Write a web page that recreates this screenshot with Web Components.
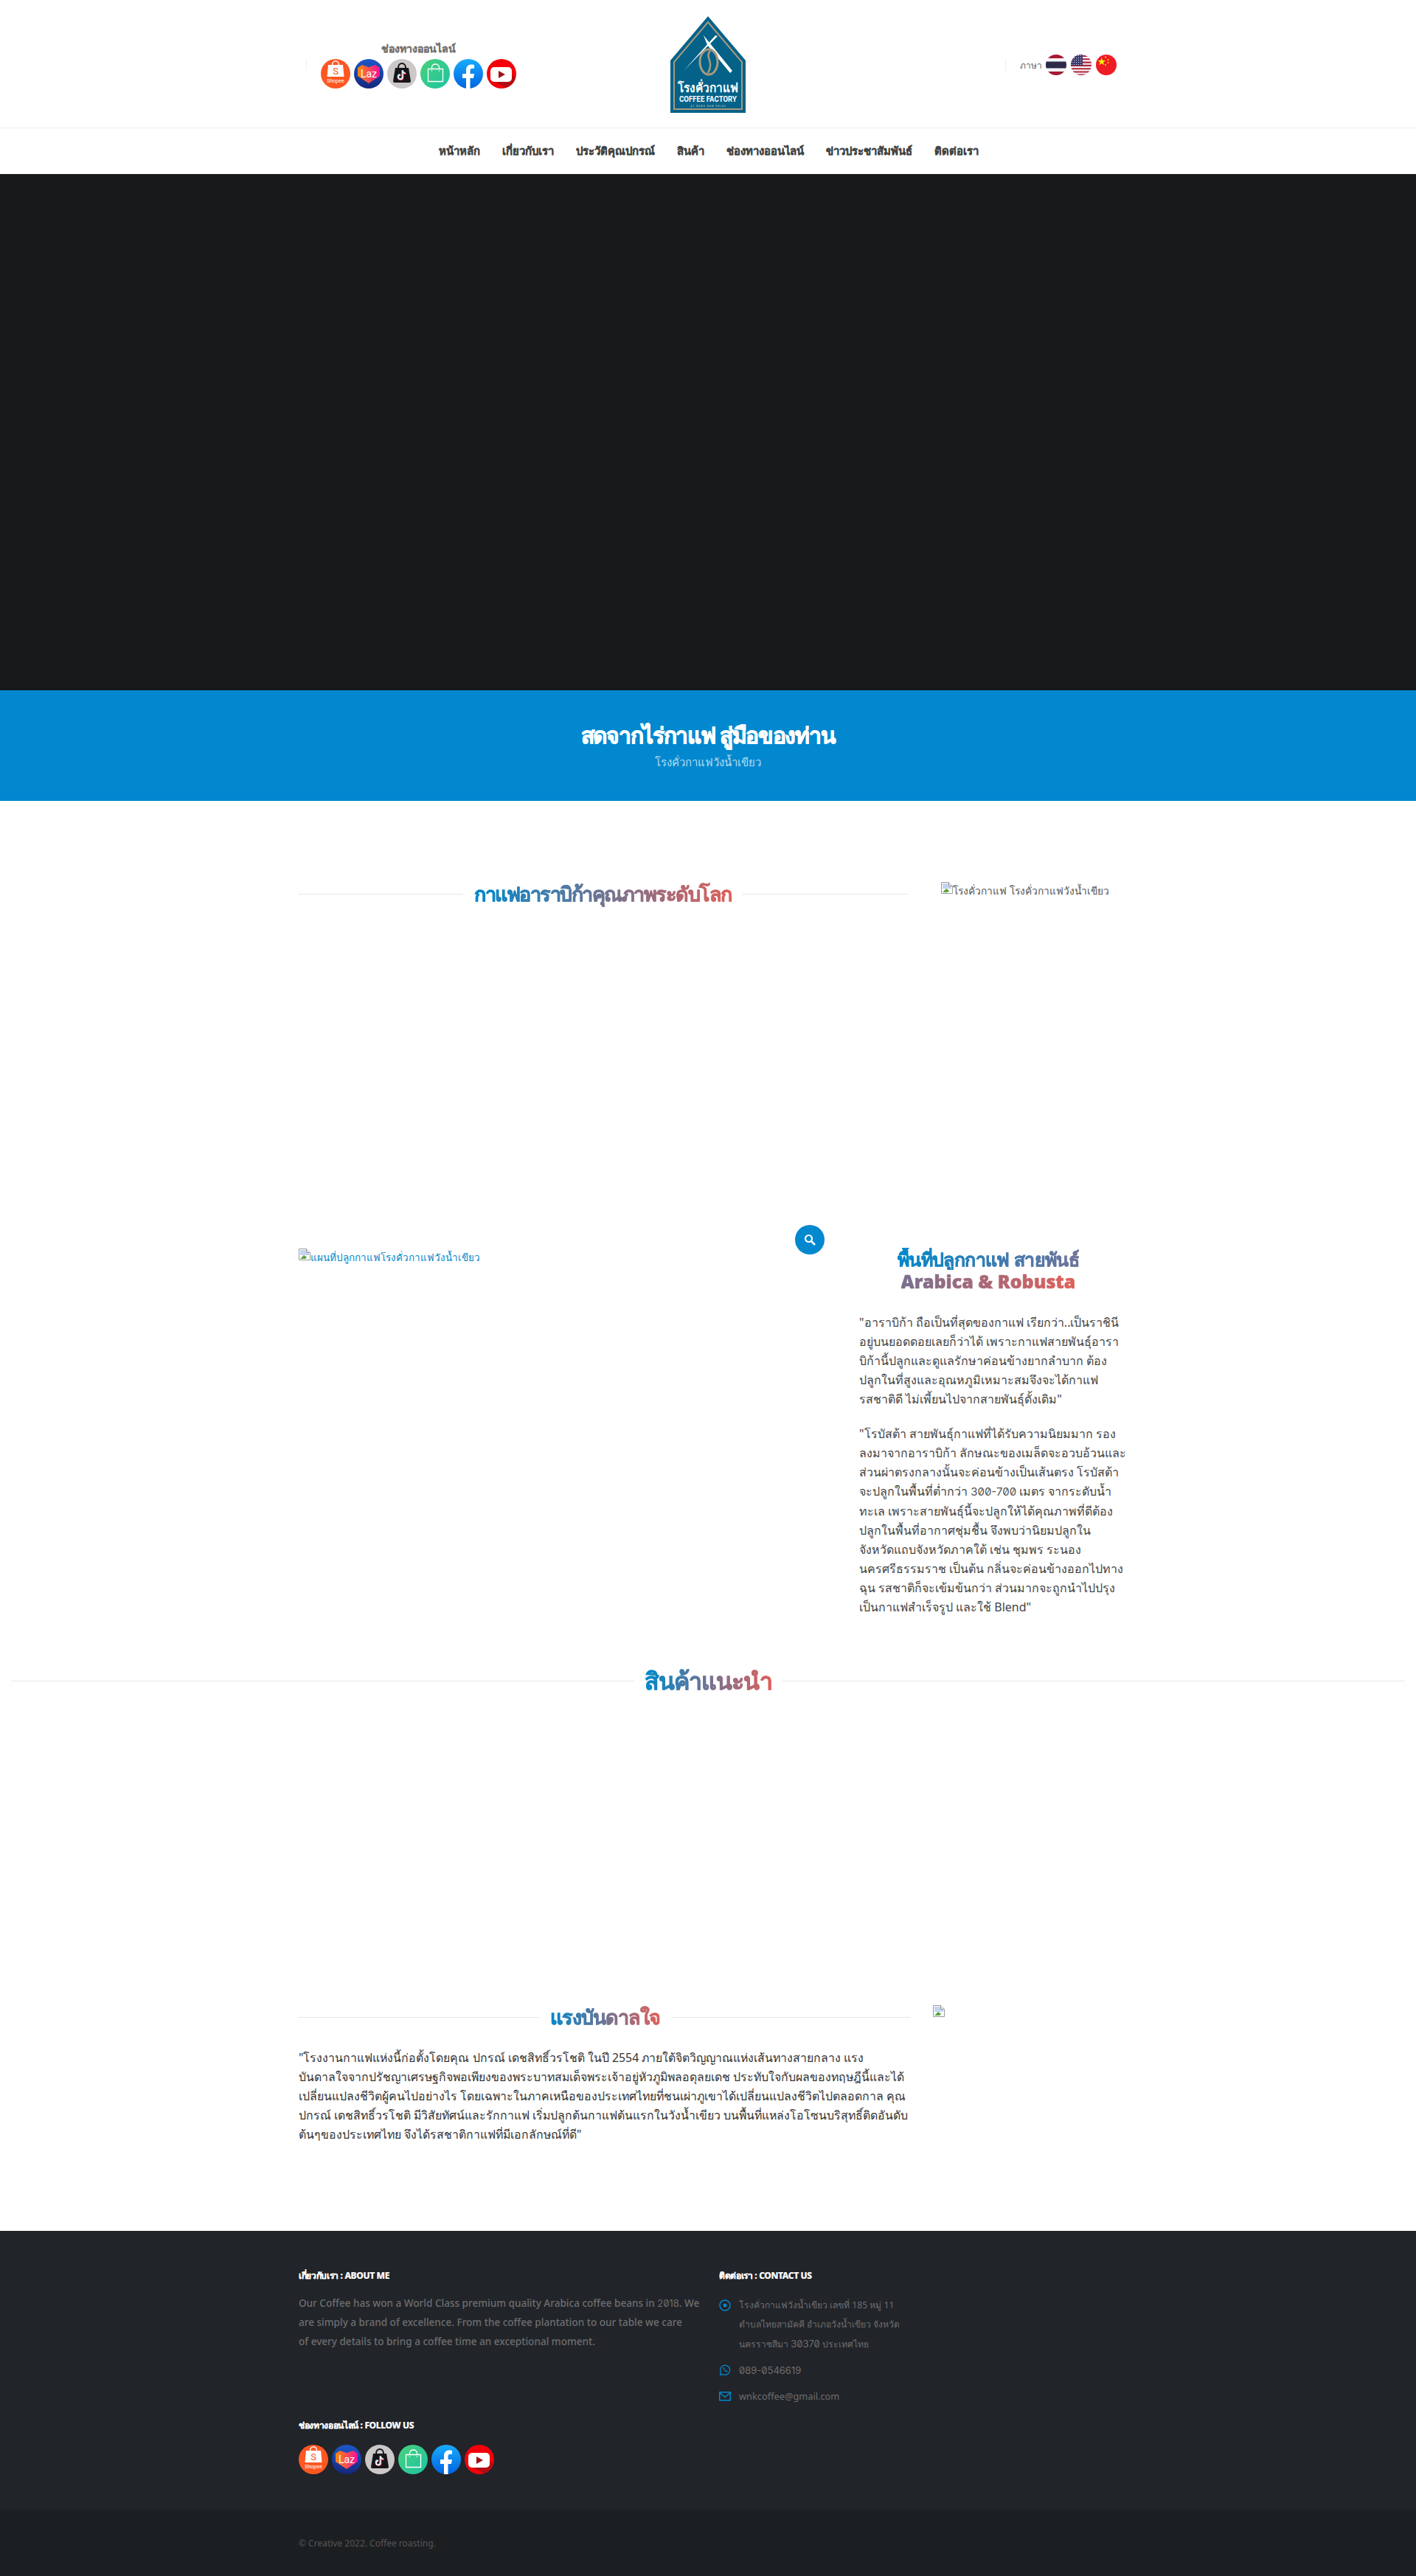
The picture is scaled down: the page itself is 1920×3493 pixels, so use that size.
<!DOCTYPE html>
<html lang="th">
<head>
<meta charset="utf-8">
<title>โรงคั่วกาแฟวังน้ำเขียว</title>
<style>
  html, body { margin: 0; padding: 0; background: #fff; }
  body { font-family: "Noto Sans", Inter, sans-serif; font-size: 16px; color: #444; }
</style>
</head>
<body>
<site-header></site-header>
<hero-band></hero-band>
<page-title main="สดจากไร่กาแฟ สู่มือของท่าน" sub="โรงคั่วกาแฟวังน้ำเขียว"></page-title>
<world-class></world-class>
<plant-area></plant-area>
<featured-products></featured-products>
<inspire-block></inspire-block>
<site-footer></site-footer>
<bottom-bar></bottom-bar>

<script>
const SOCIAL = `
  <svg viewBox="0 0 40 40"><circle cx="20" cy="20" r="20" fill="#fe5722"/><path d="M10 8h20l1.500 16h-23z" fill="#fff"/><path d="M15.500 8c0-7 9-7 9 0" fill="none" stroke="#fff" stroke-width="1.400"/><text x="20" y="21" font-size="13" text-anchor="middle" fill="#fe5722" font-family="Roboto">S</text><text x="20" y="32" font-size="7" text-anchor="middle" fill="#fff" font-family="Roboto">Shopee</text></svg>
  <svg viewBox="0 0 40 40"><defs><linearGradient id="lz" x1="0" x2="1"><stop offset="0" stop-color="#f98a0a"/><stop offset="1" stop-color="#f5109a"/></linearGradient><linearGradient id="lb" x1="0" y1="0" x2="0" y2="1"><stop offset="0" stop-color="#1c58c8"/><stop offset="1" stop-color="#16277c"/></linearGradient></defs><circle cx="20" cy="20" r="20" fill="url(#lb)"/><path d="M5 12l6-4 9 3 9-3 6 4v11L20 33 5 23z" fill="url(#lz)"/><text x="20" y="25" font-size="14" text-anchor="middle" fill="#fff" font-family="Roboto">Laz</text></svg>
  <svg viewBox="0 0 40 40"><circle cx="20" cy="20" r="20" fill="#cbc8c7"/><path d="M11 12h18l3 18q0 2-2 2H10q-2 0-2-2z" fill="#17151a"/><path d="M15 12c0-8 10-8 10 0" fill="none" stroke="#17151a" stroke-width="2"/><path d="M20.500 15v9a3 3 0 1 1-3-3M20.500 15c0 2 2 4 4 4" fill="none" stroke="#25f4ee" stroke-width="2"/><path d="M21.500 16v9a3 3 0 1 1-3-3M21.500 16c0 2 2 4 4 4" fill="none" stroke="#fe2c55" stroke-width="2"/><path d="M21 15.500v9a3 3 0 1 1-3-3M21 15.500c0 2 2 4 4 4" fill="none" stroke="#fff" stroke-width="1.400"/></svg>
  <svg viewBox="0 0 40 40"><defs><linearGradient id="gb" x1="0" y1="0" x2="1" y2="1"><stop offset="0" stop-color="#4ad07a"/><stop offset="1" stop-color="#1cc4a2"/></linearGradient></defs><circle cx="20" cy="20" r="20" fill="url(#gb)"/><path d="M10.500 13.500h20v17h-20z" fill="none" stroke="#fff" stroke-width="1.300"/><path d="M15.500 13.500v-2c0-6 10-6 10 0v2" fill="none" stroke="#fff" stroke-width="1.300"/><circle cx="15.500" cy="16" r=".8" fill="#fff"/><circle cx="25.500" cy="16" r=".8" fill="#fff"/></svg>
  <svg viewBox="0 0 40 40"><defs><linearGradient id="fb" x1="0" y1="0" x2="0" y2="1"><stop offset="0" stop-color="#18acfe"/><stop offset="1" stop-color="#0163e0"/></linearGradient></defs><circle cx="20" cy="20" r="20" fill="url(#fb)"/><path d="M17 40V26h-5v-6h5v-5c0-5 3-7.500 7-7.500 2 0 4 .3 4 .3v5h-2.500c-2.500 0-3 1.500-3 3V20h5.500l-1 6h-4.500v14z" fill="#fff"/></svg>
  <svg viewBox="0 0 40 40"><circle cx="20" cy="20" r="20" fill="#f5000a"/><path d="M15 16l9-3 15 13a20 20 0 0 1-13 13L10 30z" fill="#b30c10"/><rect x="5" y="11" width="29" height="20" rx="5" fill="#fff"/><path d="M16 16l9 5-9 5z" fill="#a31015"/></svg>`;

const BROKEN = `<svg width="16" height="16" viewBox="0 0 16 16" style="flex:none"><path d="M.5.500h10l5 5v10H.5z" fill="#fff" stroke="#9a9a9a"/><path d="M10.500.500v5h5" fill="#e8e8e8" stroke="#9a9a9a"/><path d="M2 2h8v4h4v3H2z" fill="#c4d4f2"/><path d="M2 14l5-5 3 2 4 3z" fill="#5aa53c"/><path d="M8 15l7-7v7z" fill="#fff"/></svg>`;

class SocialIcons extends HTMLElement {
  constructor() {
    super();
    this.attachShadow({ mode: "open" });
  }
  connectedCallback() {
    this.shadowRoot.innerHTML = `
      <style>
        :host { display: flex; gap: 5px; }
        svg { width: 40px; height: 40px; flex: none; display: block; }
      </style>
      ${SOCIAL}
    `;
  }
}
customElements.define("social-icons", SocialIcons);

class FancyHeading extends HTMLElement {
  constructor() {
    super();
    this.attachShadow({ mode: "open" });
  }
  connectedCallback() {
    this.shadowRoot.innerHTML = `
      <style>
        :host { display: flex; align-items: center; gap: var(--gap, 15px); }
        i { flex: 1; height: 1px; background: #e6e6e6; }
        span {
          font-weight: 900;
          font-size: var(--size, 27px);
          letter-spacing: var(--ls, -1.5px);
          line-height: var(--lh, 52px);
          white-space: nowrap;
          -webkit-text-stroke: .7px transparent;
          background: linear-gradient(90deg, #0088cc, #e0605a);
          -webkit-background-clip: text;
          background-clip: text;
          color: transparent;
        }
      </style>
      <i></i><span><slot></slot></span><i></i>
    `;
  }
}
customElements.define("fancy-heading", FancyHeading);

class BrokenImage extends HTMLElement {
  constructor() {
    super();
    this.attachShadow({ mode: "open" });
  }
  connectedCallback() {
    this.shadowRoot.innerHTML = `
      <style>
        :host { display: flex; align-items: flex-end; align-self: start; line-height: 16px; }
        span { line-height: 20px; margin-bottom: -6px; white-space: nowrap; }
      </style>
      ${BROKEN}<span><slot></slot></span>
    `;
  }
}
customElements.define("broken-image", BrokenImage);

class SiteHeader extends HTMLElement {
  constructor() {
    super();
    this.attachShadow({ mode: "open" });
  }
  connectedCallback() {
    const menu = ["หน้าหลัก", "เกี่ยวกับเรา", "ประวัติคุณปกรณ์", "สินค้า", "ช่องทางออนไลน์", "ข่าวประชาสัมพันธ์", "ติดต่อเรา"];
    this.shadowRoot.innerHTML = `
      <style>
        :host { display: block; }
        .top { height: 174px; box-sizing: border-box; border-bottom: 1px solid #eceded; }
        .wrap { width: 1140px; margin: 0 auto; display: grid; grid-template-columns: repeat(3, 380px); }
        .left { display: flex; padding: 56px 0 0 25px; }
        .rule { width: 1px; height: 16px; background: #eee; margin-top: 23px; flex: none; }
        .shop { margin-left: 19px; width: 265px; }
        .shop p { margin: 0 0 4px; text-align: center; font-size: 14px; font-weight: 800; line-height: 20px; color: #77736f; -webkit-text-stroke: .3px #77736f; }
        .logo { padding-top: 22px; display: flex; justify-content: center; }
        .right { display: flex; align-items: center; height: 28px; padding: 74px 0 0 213px; }
        .lang { margin-left: 19px; width: 35px; font-size: 12px; color: #666; }
        .flag { width: 28px; height: 28px; margin-right: 6px; flex: none; }
        nav { height: 62px; display: flex; justify-content: center; align-items: center; gap: 30px; font-size: 14.8px; font-weight: 800; color: #444; -webkit-text-stroke: .3px #444; padding-left: 2px; }
      </style>
      <div class="top">
        <div class="wrap">
          <div class="left">
            <div class="rule"></div>
            <div class="shop">
              <p>ช่องทางออนไลน์</p>
              <social-icons></social-icons>
            </div>
          </div>
          <div class="logo">
            <svg width="102" height="131" viewBox="0 0 102 131">
              <path d="M51 0l51 60v71H0V60z" fill="#046289"/>
              <path d="M51 8L97 62v64H5V62z" fill="none" stroke="#a89a7e" stroke-width="2"/>
              <path d="M61 26l3 1-46 47z" fill="#fff"/>
              <path d="M45 26l39 48-3 3-31-38z" fill="#fff"/>
              <ellipse cx="52" cy="62" rx="12" ry="17" fill="none" stroke="#a89a7e" stroke-width="3"/>
              <path d="M54 47c-8 8 6 14-3 30" fill="none" stroke="#a89a7e" stroke-width="2.500"/>
              <text x="51" y="103" font-size="17" font-weight="700" fill="#fff" text-anchor="middle" textLength="82" lengthAdjust="spacingAndGlyphs" font-family="Noto Sans, sans-serif">โรงคั่วกาแฟ</text>
              <text x="51" y="116" font-size="10" font-weight="700" fill="#fff" text-anchor="middle" textLength="78" lengthAdjust="spacingAndGlyphs" font-family="Roboto, sans-serif">COFFEE FACTORY</text>
              <text x="51" y="123" font-size="3" fill="#d6d2c8" text-anchor="middle" textLength="47" font-family="Roboto, sans-serif">AT WANG NAM KHIAO</text>
            </svg>
          </div>
          <div class="right">
            <div class="rule" style="margin-top:0"></div>
            <span class="lang">ภาษา</span>
            <svg class="flag" viewBox="0 0 28 28"><defs><clipPath id="c1"><circle cx="14" cy="14" r="14"/></clipPath></defs><g clip-path="url(#c1)"><rect width="28" height="28" fill="#f4f5f8"/><rect width="28" height="5" fill="#a51931"/><rect y="23" width="28" height="5" fill="#a51931"/><rect y="9.500" width="28" height="9" fill="#2d2a4a"/></g></svg>
            <svg class="flag" viewBox="0 0 28 28"><defs><clipPath id="c2"><circle cx="14" cy="14" r="14"/></clipPath><pattern id="st" width="3" height="3" patternUnits="userSpaceOnUse"><circle cx="1.500" cy="1.500" r=".6" fill="#fff"/></pattern></defs><g clip-path="url(#c2)"><rect width="28" height="28" fill="#f4f5f8"/><path d="M0 2h28M0 6.300h28M0 10.600h28M0 14.900h28M0 19.200h28M0 23.500h28M0 27.500h28" stroke="#b22234" stroke-width="2.100"/><rect width="16" height="15" fill="#3c3b6e"/><rect width="16" height="15" fill="url(#st)"/></g></svg>
            <svg class="flag" viewBox="0 0 28 28"><circle cx="14" cy="14" r="14" fill="#ee1c25"/><path d="M7 3.500l1.500 4.600h4.800l-3.900 2.800 1.500 4.600L7 12.700l-3.900 2.800 1.500-4.600L.7 8.100h4.800z" fill="#ff0" transform="translate(1.800 1) scale(.85)"/><g fill="#ff0"><circle cx="13" cy="3.500" r=".9"/><circle cx="16.500" cy="7" r=".9"/><circle cx="16.500" cy="11" r=".9"/><circle cx="13" cy="14" r=".9"/></g></svg>
          </div>
        </div>
      </div>
      <nav>${menu.map((m) => `<span>${m}</span>`).join("")}</nav>
    `;
  }
}
customElements.define("site-header", SiteHeader);

class HeroBand extends HTMLElement {
  constructor() {
    super();
    this.attachShadow({ mode: "open" });
  }
  connectedCallback() {
    this.shadowRoot.innerHTML = `<style>:host { display: block; height: 700px; background: #17181a; }</style>`;
  }
}
customElements.define("hero-band", HeroBand);

class PageTitle extends HTMLElement {
  constructor() {
    super();
    this.attachShadow({ mode: "open" });
  }
  connectedCallback() {
    this.shadowRoot.innerHTML = `
      <style>
        :host { display: block; height: 150px; box-sizing: border-box; padding-top: 36px; background: #0288cf; text-align: center; }
        h1 { margin: 0; font-size: 30px; letter-spacing: -1.3px; line-height: 49px; font-weight: 900; color: #fff; -webkit-text-stroke: .8px #fff; }
        p { margin: 0; font-size: 15px; line-height: 24px; color: rgba(255,255,255,.72); }
      </style>
      <h1>${this.getAttribute("main")}</h1>
      <p>${this.getAttribute("sub")}</p>
    `;
  }
}
customElements.define("page-title", PageTitle);

class WorldClass extends HTMLElement {
  constructor() {
    super();
    this.attachShadow({ mode: "open" });
  }
  connectedCallback() {
    this.shadowRoot.innerHTML = `
      <style>
        :host { display: block; height: 574px; box-sizing: border-box; padding-top: 100px; }
        .row { width: 1140px; margin: 0 auto; display: grid; grid-template-columns: 855px 285px; }
        fancy-heading { margin: 0 15px; }
        broken-image { margin: 10px 0 0 31px; font-size: 13.8px; color: #555; }
      </style>
      <div class="row">
        <fancy-heading>กาแฟอาราบิก้าคุณภาพระดับโลก</fancy-heading>
        <broken-image>โรงคั่วกาแฟ โรงคั่วกาแฟวังน้ำเขียว</broken-image>
      </div>
    `;
  }
}
customElements.define("world-class", WorldClass);

class PlantArea extends HTMLElement {
  constructor() {
    super();
    this.attachShadow({ mode: "open" });
  }
  connectedCallback() {
    this.shadowRoot.innerHTML = `
      <style>
        :host { display: block; height: 594px; }
        .row { width: 1140px; margin: 0 auto; display: grid; grid-template-columns: 760px 380px; }
        .pic { position: relative; padding: 33px 15px 0; }
        broken-image { font-size: 13.5px; color: #0088cc; }
        .zoom { position: absolute; top: 1px; left: 688px; width: 40px; height: 40px; border-radius: 50%; background: #0288cf; display: flex; align-items: center; justify-content: center; }
        .txt { padding: 32px 15px 0; }
        h2 { margin: 0 0 28px; text-align: center; font-size: 25px; line-height: 30px; font-weight: 900; }
        h2 span {
          display: table;
          margin: 0 auto;
          -webkit-text-stroke: .6px transparent;
          -webkit-background-clip: text;
          background-clip: text;
          color: transparent;
        }
        h2 .a { background-image: linear-gradient(90deg, #0088cc, #6f7399); letter-spacing: -.6px; }
        h2 .b { background-image: linear-gradient(90deg, #777090, #e0605a); }
        p { margin: 0 0 21px; font-size: 16px; line-height: 26px; color: #444; white-space: nowrap; }
        .num { font-family: Inter, sans-serif; font-size: 15px; font-weight: 400; color: #555; font-feature-settings: "zero"; }
      </style>
      <div class="row">
        <div class="pic">
          <broken-image>แผนที่ปลูกกาแฟโรงคั่วกาแฟวังน้ำเขียว</broken-image>
          <div class="zoom"><svg width="16" height="16" viewBox="0 0 16 16"><circle cx="6.500" cy="6.500" r="4.500" fill="none" stroke="#fff" stroke-width="2.200"/><path d="M10 10l5 5" stroke="#fff" stroke-width="2.600"/></svg></div>
        </div>
        <div class="txt">
          <h2><span class="a">พื้นที่ปลูกกาแฟ สายพันธ์</span><span class="b">Arabica &amp; Robusta</span></h2>
          <p>"อาราบิก้า ถือเป็นที่สุดของกาแฟ เรียกว่า..เป็นราชินี<br>อยู่บนยอดดอยเลยก็ว่าได้ เพราะกาแฟสายพันธุ์อารา<br>บิก้านี้ปลูกและดูแลรักษาค่อนข้างยากลำบาก ต้อง<br>ปลูกในที่สูงและอุณหภูมิเหมาะสมจึงจะได้กาแฟ<br>รสชาติดี ไม่เพี้ยนไปจากสายพันธุ์ดั้งเดิม"</p>
          <p>"โรบัสต้า สายพันธุ์กาแฟที่ได้รับความนิยมมาก รอง<br>ลงมาจากอาราบิก้า ลักษณะของเมล็ดจะอวบอ้วนและ<br>ส่วนผ่าตรงกลางนั้นจะค่อนข้างเป็นเส้นตรง โรบัสต้า<br>จะปลูกในพื้นที่ต่ำกว่า <span class="num">300-700</span> เมตร จากระดับน้ำ<br>ทะเล เพราะสายพันธุ์นี้จะปลูกให้ได้คุณภาพที่ดีต้อง<br>ปลูกในพื้นที่อากาศชุ่มชื้น จึงพบว่านิยมปลูกใน<br>จังหวัดแถบจังหวัดภาคใต้ เช่น ชุมพร ระนอง<br>นครศรีธรรมราช เป็นต้น กลิ่นจะค่อนข้างออกไปทาง<br>ฉุน รสชาติก็จะเข้มข้นกว่า ส่วนมากจะถูกนำไปปรุง<br>เป็นกาแฟสำเร็จรูป และใช้ Blend"</p>
        </div>
      </div>
    `;
  }
}
customElements.define("plant-area", PlantArea);

class FeaturedProducts extends HTMLElement {
  constructor() {
    super();
    this.attachShadow({ mode: "open" });
  }
  connectedCallback() {
    this.shadowRoot.innerHTML = `
      <style>
        :host { display: block; height: 461px; box-sizing: border-box; padding: 0 15px; --size: 32px; --ls: -1px; --lh: 50px; --gap: 14px; }
      </style>
      <fancy-heading>สินค้าแนะนำ</fancy-heading>
    `;
  }
}
customElements.define("featured-products", FeaturedProducts);

class InspireBlock extends HTMLElement {
  constructor() {
    super();
    this.attachShadow({ mode: "open" });
  }
  connectedCallback() {
    this.shadowRoot.innerHTML = `
      <style>
        :host { display: block; height: 310px; --size: 27px; --ls: -1px; --lh: 40px; }
        .row { width: 1140px; margin: 0 auto; display: grid; grid-template-columns: 845px 295px; }
        .col { padding-left: 15px; }
        p { margin: 22px 0 0; font-size: 15.85px; line-height: 26px; color: #333; white-space: nowrap; }
        broken-image { margin: 4px 0 0 30px; }
      </style>
      <div class="row">
        <div class="col">
          <fancy-heading>แรงบันดาลใจ</fancy-heading>
          <p>"โรงงานกาแฟแห่งนี้ก่อตั้งโดยคุณ ปกรณ์ เดชสิทธิ์วรโชติ ในปี 2554 ภายใต้จิตวิญญาณแห่งเส้นทางสายกลาง แรง<br>บันดาลใจจากปรัชญาเศรษฐกิจพอเพียงของพระบาทสมเด็จพระเจ้าอยู่หัวภูมิพลอดุลยเดช ประทับใจกับผลของทฤษฎีนี้และได้<br>เปลี่ยนแปลงชีวิตผู้คนไปอย่างไร โดยเฉพาะในภาคเหนือของประเทศไทยที่ชนเผ่าภูเขาได้เปลี่ยนแปลงชีวิตไปตลอดกาล คุณ<br>ปกรณ์ เดชสิทธิ์วรโชติ มีวิสัยทัศน์และรักกาแฟ เริ่มปลูกต้นกาแฟต้นแรกในวังน้ำเขียว บนพื้นที่แหล่งโอโซนบริสุทธิ์ติดอันดับ<br>ต้นๆของประเทศไทย จึงได้รสชาติกาแฟที่มีเอกลักษณ์ที่ดี"</p>
        </div>
        <broken-image></broken-image>
      </div>
    `;
  }
}
customElements.define("inspire-block", InspireBlock);

class SiteFooter extends HTMLElement {
  constructor() {
    super();
    this.attachShadow({ mode: "open" });
  }
  connectedCallback() {
    this.shadowRoot.innerHTML = `
      <style>
        :host { display: block; height: 378px; box-sizing: border-box; padding-top: 51px; background: #212429; color: #6e6e6e; font-size: 12.2px; line-height: 26px; }
        .row { width: 1140px; margin: 0 auto; display: grid; grid-template-columns: 570px 570px; }
        .col { padding: 0 15px; }
        h4 { margin: 0; font-size: 12px; letter-spacing: -.35px; line-height: 20px; font-weight: 800; color: #fff; -webkit-text-stroke: .2px #fff; }
        .about { margin: 14px 0 0; white-space: nowrap; font-size: 13.55px; font-weight: 500; }
        .follow { margin-top: 91px; }
        social-icons { margin-top: 16px; }
        .item { display: flex; gap: 11px; margin-top: 9px; }
        .item svg { width: 16px; height: 16px; flex: none; margin-top: 5px; }
        .item div { white-space: nowrap; }
        .first { margin-top: 17px; }
        .num { font-family: Inter, sans-serif; font-size: 13px; font-weight: 400; font-feature-settings: "zero"; }
        .mail { font-size: 12.8px; }
      </style>
      <div class="row">
        <div class="col">
          <h4>เกี่ยวกับเรา : ABOUT ME</h4>
          <p class="about">Our Coffee has won a World Class premium quality Arabica coffee beans in <span class="num">2018</span>. We<br>are simply a brand of excellence. From the coffee plantation to our table we care<br>of every details to bring a coffee time an exceptional moment.</p>
          <h4 class="follow">ช่องทางออนไลน์ : FOLLOW US</h4>
          <social-icons></social-icons>
        </div>
        <div class="col">
          <h4>ติดต่อเรา : CONTACT US</h4>
          <div class="item first">
            <svg viewBox="0 0 16 16"><circle cx="8" cy="8" r="7" fill="none" stroke="#0288cf" stroke-width="1.500"/><circle cx="8" cy="8" r="2.500" fill="#0288cf"/></svg>
            <div>โรงคั่วกาแฟวังน้ำเขียว เลขที่ 185 หมู่ 11<br>ตำบลไทยสามัคคี อำเภอวังน้ำเขียว จังหวัด<br>นครราชสีมา <span class="num">30370</span> ประเทศไทย</div>
          </div>
          <div class="item">
            <svg viewBox="0 0 16 16"><path d="M1.500 14.500l1-3.500a6.500 6.500 0 1 1 2.500 2.500z" fill="none" stroke="#0288cf" stroke-width="1.300"/><path d="M5.500 5c1 3 2.500 4.500 5 5.500l1-1.500-2-1-1 .6-1.500-1.800.6-1-1-2z" fill="#0288cf"/></svg>
            <div class="num">089-0546619</div>
          </div>
          <div class="item">
            <svg viewBox="0 0 16 16"><rect x=".75" y="2.750" width="14.500" height="11" fill="none" stroke="#0288cf" stroke-width="1.500"/><path d="M1 3.500l7 6 7-6" fill="none" stroke="#0288cf" stroke-width="1.500"/></svg>
            <div class="mail">wnkcoffee@gmail.com</div>
          </div>
        </div>
      </div>
    `;
  }
}
customElements.define("site-footer", SiteFooter);

class BottomBar extends HTMLElement {
  constructor() {
    super();
    this.attachShadow({ mode: "open" });
  }
  connectedCallback() {
    this.shadowRoot.innerHTML = `
      <style>
        :host { display: block; height: 90px; background: #1c1f22; color: #555; font-size: 12px; }
        div { width: 1110px; height: 90px; margin: 0 auto; display: flex; align-items: center; }
      </style>
      <div>© Creative 2022. Coffee roasting.</div>
    `;
  }
}
customElements.define("bottom-bar", BottomBar);
</script>
</body>
</html>
